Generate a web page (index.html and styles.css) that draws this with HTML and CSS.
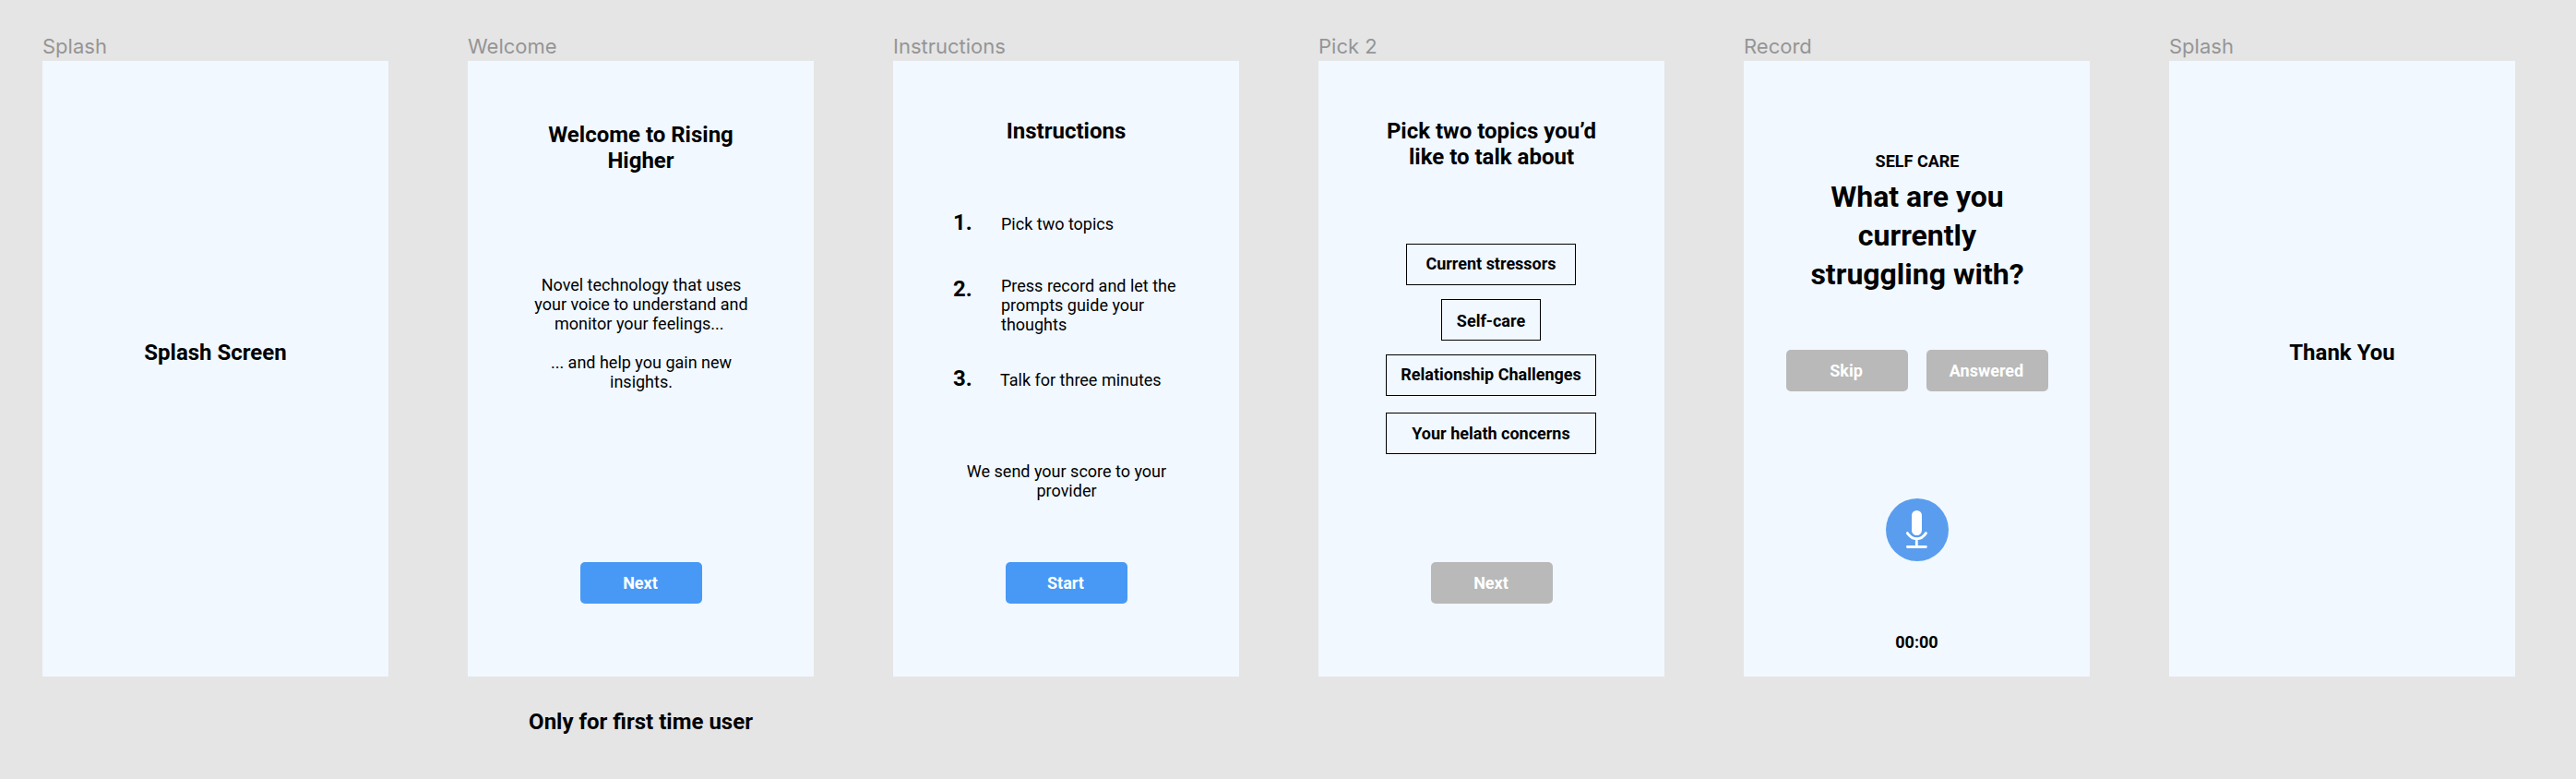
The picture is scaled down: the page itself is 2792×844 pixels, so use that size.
FILE: index.html
```html
<!DOCTYPE html>
<html lang="en">
<head>
<meta charset="utf-8">
<title>Rising Higher – screens</title>
<link rel="stylesheet" href="styles.css">
</head>
<body>
<main class="board">
  <section class="artboard">
    <div class="label">Splash</div>
    <div class="screen splash"><h2 class="title">Splash Screen</h2></div>
  </section>

  <section class="artboard">
    <div class="label">Welcome</div>
    <div class="screen welcome">
      <h2 class="title">Welcome to Rising<br>Higher</h2>
      <div class="copy">
        <p>Novel technology that uses<br>your voice to understand and<br>monitor your feelings...&nbsp;</p>
        <p>... and help you gain new<br>insights.</p>
      </div>
      <button class="btn primary cta">Next</button>
    </div>
    <p class="note">Only for first time user</p>
  </section>

  <section class="artboard">
    <div class="label">Instructions</div>
    <div class="screen instructions">
      <h2 class="title">Instructions</h2>
      <div class="steps">
        <div class="step first"><span class="num">1.</span><span>Pick two topics</span></div>
        <div class="step second"><span class="num">2.</span><span>Press record and let the<br>prompts guide your<br>thoughts</span></div>
        <div class="step third"><span class="num">3.</span><span>Talk for three minutes</span></div>
      </div>
      <p class="score">We send your score to your<br>provider</p>
      <button class="btn primary cta">Start</button>
    </div>
  </section>

  <section class="artboard">
    <div class="label">Pick 2</div>
    <div class="screen pick">
      <h2 class="title">Pick two topics you’d<br>like to talk about</h2>
      <div class="topics">
        <button class="topic current">Current stressors</button>
        <button class="topic self">Self-care</button>
        <button class="topic relation">Relationship Challenges</button>
        <button class="topic health">Your helath concerns</button>
      </div>
      <button class="btn muted cta">Next</button>
    </div>
  </section>

  <section class="artboard">
    <div class="label">Record</div>
    <div class="screen record">
      <p class="category">SELF CARE</p>
      <h1 class="question">What are you<br>currently<br>struggling with?</h1>
      <div class="actions">
        <button class="btn muted">Skip</button>
        <button class="btn muted">Answered</button>
      </div>
      <svg class="mic" viewBox="0 0 68 68" width="68" height="68">
        <circle cx="34" cy="34" r="34" fill="#5a9dee"/>
        <rect x="28" y="13" width="11" height="27" rx="5.5" fill="#fff"/>
        <path d="M23.3 37.6C29 45.8 38 45.8 43.5 37.6M33.3 44V52M23.4 52.5H43.4" fill="none" stroke="#fff" stroke-width="2.8" stroke-linecap="round"/>
      </svg>
      <p class="timer">00:00</p>
    </div>
  </section>

  <section class="artboard">
    <div class="label">Splash</div>
    <div class="screen splash"><h2 class="title">Thank You</h2></div>
  </section>
</main>
</body>
</html>
```
FILE: styles.css
```css
* { box-sizing: border-box; }
body {
  margin: 0;
  background: #e5e5e5;
  color: #000;
  font: 400 18px/21px Roboto, sans-serif;
}
h1, h2, p { margin: 0; }
button { font: inherit; margin: 0; }

.board {
  display: flex;
  gap: 86px;
  width: 2792px;
  height: 844px;
  padding: 36px 0 0 46px;
  overflow: hidden;
}
.artboard { flex: none; width: 375px; }
.label {
  height: 30px;
  font: 400 22px/28px Inter, sans-serif;
  color: #959595;
}
.screen {
  display: flex;
  flex-direction: column;
  align-items: center;
  height: 667px;
  background: #f1f8ff;
  text-align: center;
}
.title, .note { font-weight: 700; font-size: 24px; line-height: 28px; }
.note { margin-top: 35px; text-align: center; }

.btn {
  width: 132px;
  height: 45px;
  padding: 0 2px 0 0;
  border: 0;
  border-radius: 5px;
  color: #fff;
  font-weight: 700;
}
.primary { background: #4799f5; }
.muted { background: #b9b9b9; }
.cta { margin: auto 0 79px 1px; }

.splash { padding-top: 302px; }

.welcome { padding-top: 66px; }
.copy { display: grid; gap: 21px; margin: 110px 0 0 1px; }

.instructions { padding-top: 62px; }
.steps { align-self: stretch; margin-top: 71px; padding-left: 65px; text-align: left; }
.step { display: grid; grid-template-columns: 52px 1fr; align-items: start; }
.num { font-weight: 700; font-size: 24px; line-height: 28px; }
.first { align-items: last baseline; }
.second { margin-top: 44px; }
.third { grid-template-columns: 51px 1fr; margin-top: 34px; align-items: last baseline; }
.score { margin: 76px 0 0 1px; }

.pick { padding-top: 62px; }
.topics { display: flex; flex-direction: column; align-items: center; gap: 15px; margin: 80px 1px 0 0; }
.topic {
  height: 45px;
  padding: 0;
  border: 1px solid #000;
  background: transparent;
  color: #000;
  font-weight: 700;
}
.current { width: 184px; padding-bottom: 2px; }
.self { width: 108px; padding-top: 2px; }
.relation { width: 228px; padding-bottom: 2px; }
.health { width: 228px; margin-top: 3px; }

.record { padding: 98px 0 0 1px; }
.category, .timer { font-weight: 700; }
.question { margin-top: 7px; font-size: 32px; line-height: 42px; }
.actions { display: flex; gap: 20px; margin-top: 61px; }
.mic { flex: none; margin-top: 116px; }
.timer { margin: 77px 1px 0 0; }
```
